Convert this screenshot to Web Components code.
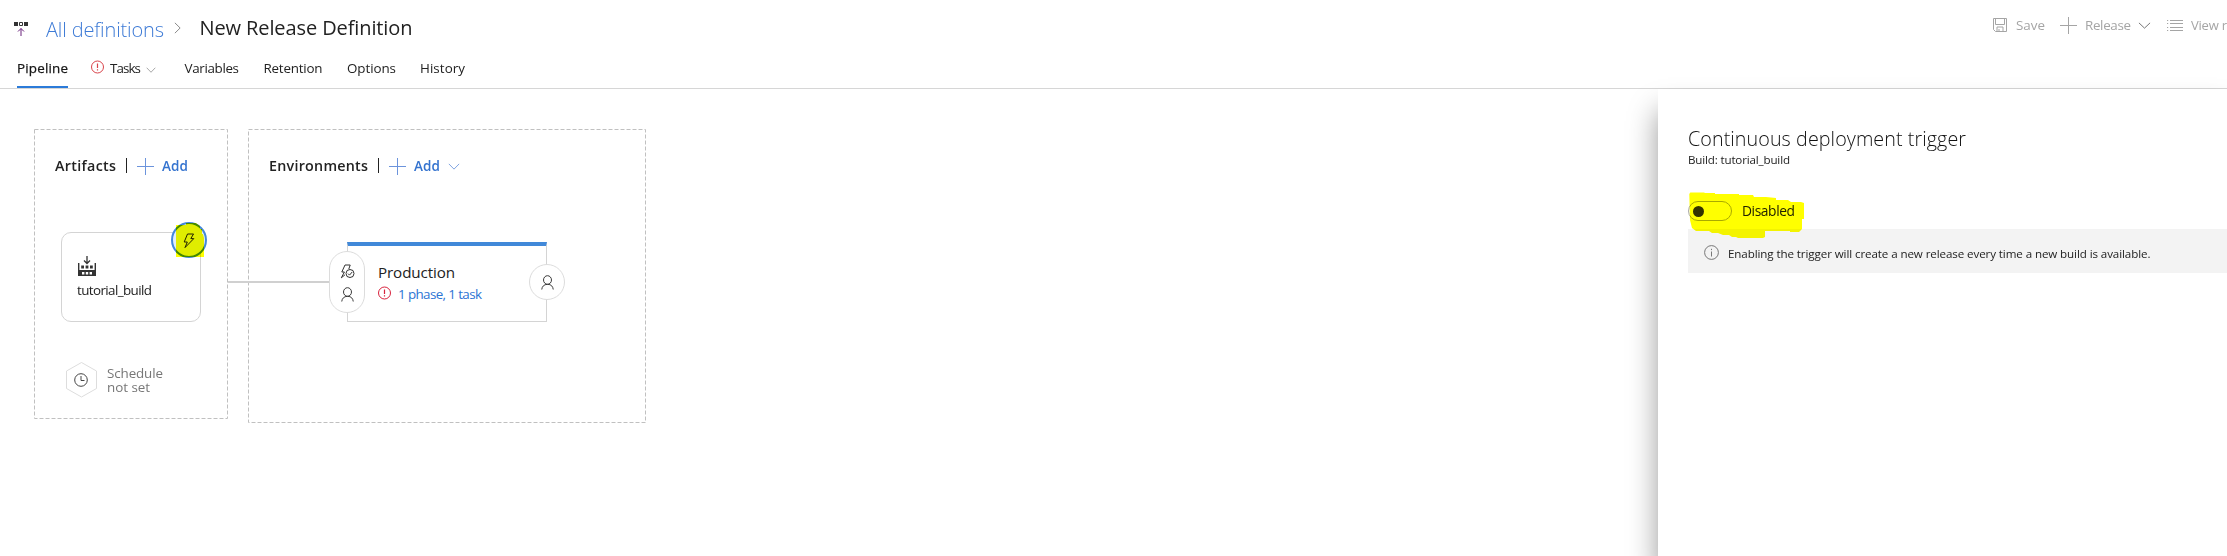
<!DOCTYPE html>
<html lang="en">
<head>
<meta charset="utf-8">
<title>New Release Definition</title>
<style>
html,body{margin:0;height:100%}
body{font-family:"Open Sans","Noto Sans",sans-serif;color:#333;background:#fff;overflow:hidden}
</style>
</head>
<body>
<release-editor></release-editor>
<script>
const define = (name, css, html, init) => customElements.define(name, class extends HTMLElement {
  connectedCallback() {
    if (this.shadowRoot) return;
    const root = this.attachShadow({ mode: 'open' });
    root.innerHTML = `<style>*{box-sizing:border-box}${css}</style>${html}`;
    if (init) init(this, root);
  }
});

/* Label whose tracking is tuned so that it fills the width given in "w". */
define('fit-text',
  `:host{display:block;white-space:nowrap;flex:none;font-size:13px;line-height:20px}span{display:inline-block}`,
  `<span><slot></slot></span>`,
  (host, root) => {
    const w = +host.getAttribute('w'), s = +host.getAttribute('size') || 13.4;
    host.style.fontSize = s + 'px';
    host.style.width = w + 'px';
    const span = root.querySelector('span');
    const natural = span.getBoundingClientRect().width;
    const n = host.textContent.length;
    span.style.letterSpacing = ((w - natural) / (n - 1)) + 'px';
  });

/* Line icons, one glyph per name. */
const glyphs = {
  pipeline: [14, 16, `<path d="M0 1h4v4H0zM10 1h4v4h-4z" fill="#333" stroke="none"/><path d="M5.500 1.500h3v3h-3z" stroke="#333"/><path d="M7 15V7.500M4 10.500l3-3 3 3" stroke="#68217a"/>`],
  chevronRight: [8, 14, `<path d="M1 1l6 6-6 6"/>`],
  chevron: [14, 8, `<path d="M1 1l6 6 6-6"/>`],
  plus: [17, 17, `<path d="M8.5 0v17M0 8.5h17"/>`],
  save: [14, 14, `<path d="M.5.5h13v13h-11l-2-2zM2.5.5v6h9v-6M4 13.5V9h6v4.5M6 13.5v-2.5"/>`],
  list: [16, 12, `<path d="M0 .5h1.200M3 .5h13M0 3.500h1.200M3 3.500h13M0 7.500h1.200M3 7.500h13M0 10.500h1.200M3 10.500h13"/>`],
  alert: [14, 14, `<circle cx="6.500" cy="7" r="6"/><path d="M6.500 3.500v4.500M6.500 9.300v1.300" stroke-width="1.200"/>`],
  info: [15, 15, `<circle cx="7.5" cy="7.5" r="6.9"/><path d="M7.5 6.5v5M7.5 3.8v1.3"/>`],
  clock: [14, 14, `<circle cx="7" cy="7" r="6.3"/><path d="M7 3v4.5h3.5"/>`],
  person: [14, 15, `<circle cx="7" cy="5" r="4.3"/><path d="M.8 14.5C1.2 11.5 3 9.4 7 9.3s5.800 2.200 6.200 5.200"/>`],
  bolt: [12, 16, `<path d="M4.500 1h6L7.800 5.600h3L2 14.600 4.300 9H1.200z"/>`],
  boltCheck: [15, 15, `<path d="M8.800 5L10.200 1H5L1.800 8h2.600L1.300 13.800 5 10.800"/><circle cx="10" cy="9.500" r="4"/><path d="M8 9.600l1.500 1.500L12.200 8"/>`],
  build: [18, 20, `<path d="M9 0v7.500M6 4.500l3 3 3-3" stroke-width="1.300"/><path d="M.7 7v12M17.300 7v12" stroke-width="1.400"/><path d="M3.200 9.500h2.800v3H3.200zM7.600 9.500h2.800v3H7.600zM12 9.500h2.800v3H12z" fill="#333" stroke="none"/><path d="M0 14h18v6H0zM4 16v2.400h2.400V16zM7.800 16v2.400h2.400V16zM11.600 16v2.400H14V16z" fill="#333" fill-rule="evenodd" stroke="none"/>`]
};
define('line-icon', `:host{display:block;flex:none}svg{display:block;fill:none;stroke:currentColor;stroke-width:1}`, '',
  (host, root) => {
    const [w, h, body] = glyphs[host.getAttribute('name')];
    const dw = host.getAttribute('w') || w, dh = host.getAttribute('h') || h;
    root.innerHTML += `<svg width="${dw}" height="${dh}" viewBox="0 0 ${w} ${h}" preserveAspectRatio="none">${body}</svg>`;
  });

define('page-header', `
:host{display:block;height:89px;border-bottom:1px solid #d6d6d6;position:relative}
.top{display:flex;height:56px;padding-left:14px;align-items:flex-start}
.logo{margin-top:21px}
.all{color:#3e7bd6;font-weight:300;margin:20px 0 0 18px}
.sep{color:#777;margin:22px 0 0 10px}
.title{margin:18px 0 0 18.500px;color:#222}
.tools{margin-left:auto;width:234px;display:flex;color:#a5a5a5;overflow:hidden}
.tools fit-text{margin-top:15px}
.tabs{display:flex;height:32px;padding-left:17px}
.tab{display:flex;height:32px;padding-top:2px;color:#222}
.tab.on{border-bottom:2px solid #2b7bd9;color:#111;-webkit-text-stroke:.25px #222}`,
`<div class="top">
 <line-icon class="logo" name="pipeline" w="14" h="16"></line-icon>
 <fit-text class="all" w="118" size="20">All definitions</fit-text>
 <line-icon class="sep" name="chevronRight" w="7" h="12"></line-icon>
 <fit-text class="title" w="213" size="20">New Release Definition</fit-text>
 <div class="tools">
  <line-icon name="save" style="margin-top:18px"></line-icon><fit-text w="29" style="margin-left:9px">Save</fit-text>
  <line-icon name="plus" style="margin:17px 0 0 15px"></line-icon><fit-text w="46" style="margin-left:8px">Release</fit-text>
  <line-icon name="chevron" w="13" h="7" style="margin:22px 0 0 7px;color:#666"></line-icon>
  <line-icon name="list" style="margin:20px 0 0 16px"></line-icon><fit-text w="36" size="13" style="margin-left:8px">View r</fit-text>
 </div>
</div>
<div class="tabs">
 <div class="tab on"><fit-text w="51">Pipeline</fit-text></div>
 <div class="tab" style="margin-left:23px"><line-icon name="alert" style="color:#d9434a;margin:2px 5px 0 0"></line-icon><fit-text w="31">Tasks</fit-text><line-icon name="chevron" w="10" h="6" style="color:#888;margin:9px 0 0 5px"></line-icon></div>
 <div class="tab" style="margin-left:28.500px"><fit-text w="54.500">Variables</fit-text></div>
 <div class="tab" style="margin-left:24.500px"><fit-text w="59">Retention</fit-text></div>
 <div class="tab" style="margin-left:24.500px"><fit-text w="49">Options</fit-text></div>
 <div class="tab" style="margin-left:24px"><fit-text w="45">History</fit-text></div>
</div>`);

/* Dashed lane: a heading with its Add action, and the nodes slotted in. */
define('pipeline-lane', `
:host{display:block;box-sizing:border-box;position:relative;flex:none}
.edge{position:absolute;inset:0;width:100%;height:100%;pointer-events:none}
.head{display:flex;height:20px;margin:27px 0 0 21px;color:#222}
.head fit-text{font-weight:600}
i{width:1px;height:15px;background:#222;margin:2px 10px 0 10px}
.head .add{color:#3473cf;margin-left:8px}
line-icon{color:#6c94dc;margin-top:2px}`,
`<svg class="edge"><rect x=".5" y=".5" fill="none" stroke="#c0c0c0" stroke-dasharray="4 2"/></svg>
<div class="head"></div><slot></slot>`,
  (host, root) => {
    const r = root.querySelector('rect');
    r.setAttribute('width', host.offsetWidth - 1);
    r.setAttribute('height', host.offsetHeight - 1);
    root.querySelector('.head').innerHTML = `<fit-text w="${host.getAttribute('label-width')}" size="14.300">${host.getAttribute('label')}</fit-text><i></i><line-icon name="plus"></line-icon><fit-text class="add" w="26" size="13.500">Add</fit-text>` +
      (host.hasAttribute('menu') ? '<line-icon name="chevron" w="12" h="7" style="margin:7px 0 0 8px"></line-icon>' : '');
  });

define('artifact-card', `
:host{display:block;box-sizing:border-box;width:140px;height:90px;margin:56px 0 0 27px;border:1px solid #d4d4d4;border-radius:10px;background:#fff;position:relative;padding:23px 0 0 15px}
line-icon{margin-left:1px}
fit-text{margin-top:4px;color:#222}
.trigger{position:absolute;left:109px;top:-11px;width:36px;height:36px;border:2px solid #4488da;border-radius:50%;background:#e0edfa;display:flex;align-items:center;justify-content:center}
.trigger line-icon{margin:2px 0 0 0;color:#222}
.marker{position:absolute;left:114px;top:-11px;mix-blend-mode:multiply}`,
`<line-icon name="build" w="18" h="20"></line-icon><div class="name"></div>
<div class="trigger"><line-icon name="bolt" w="12" h="16"></line-icon></div>
<svg class="marker" width="30" height="36"><path fill="#ff0" d="M0 3h10V1h10l4 3v3h2v5h1l1 4v19H0z"/></svg>`,
  (host, root) => {
    root.querySelector('.name').innerHTML = `<fit-text w="75">${host.getAttribute('name')}</fit-text>`;
  });

define('schedule-badge', `
:host{display:flex;margin:39px 0 0 32px;color:#777}
.hex{width:31px;height:37px;position:relative;flex:none}
svg{display:block}
line-icon{position:absolute;left:8px;top:12px;color:#444}
.txt{margin:5px 0 0 10px}`,
`<div class="hex"><svg width="31" height="37"><path d="M15.500 1.500l15 8.500v17.500l-15 8.500L.5 27.500V10z" fill="none" stroke="#ddd"/></svg><line-icon name="clock"></line-icon></div>
<div class="txt"><fit-text w="56" style="line-height:14px">Schedule</fit-text><fit-text w="43" style="line-height:14px">not set</fit-text></div>`);

define('environment-card', `
:host{display:block;box-sizing:border-box;width:200px;height:80px;margin:66px 0 0 99px;border:1px solid #d4d4d4;border-top:4px solid #4189d9;position:relative;padding:16px 0 0 30px;background:#fff}
.pre,.post{position:absolute;width:36px;border:1px solid #dcdcdc;border-radius:18px;background:#fff;display:flex;flex-direction:column;align-items:center;color:#333}
.pre{left:-19px;top:5px;height:62px;padding-top:12px;gap:8px}
.post{left:181px;top:18px;height:36px;justify-content:center}
.name{color:#222}
.jobs{display:flex;gap:6px;color:#2c74d4;margin-top:2px}
.jobs line-icon{color:#d8213c;margin-top:2px}`,
`<fit-text class="name" w="77" size="15.200">Production</fit-text>
<div class="jobs"><line-icon name="alert"></line-icon><fit-text w="84">1 phase, 1 task</fit-text></div>
<div class="pre"><line-icon name="boltCheck"></line-icon><line-icon name="person" w="13" h="15"></line-icon></div>
<div class="post"><line-icon name="person" w="13" h="15"></line-icon></div>`);

define('trigger-panel', `
:host{display:block;box-sizing:border-box;width:569px;background:#fff;padding:40px 0 0 30px;box-shadow:0 22px 28px rgba(0,0,0,.4);position:relative;color:#333}
.title{font-weight:300;color:#111}
.build{margin-top:1px;color:#222}
.row{display:flex;margin-top:31px;height:28px}
.switch{width:44px;height:20px;border:1px solid #aaa;border-radius:10px;padding:4px 0 0 4px}
.switch b{display:block;width:11px;height:11px;border-radius:50%;background:#333}
.row fit-text{margin-left:10px;color:#222}
.note{display:flex;height:44px;background:#f3f3f3;padding:16px 0 0 16px;color:#777}
.note fit-text{margin:-1px 0 0 9px;color:#222}
.marker{position:absolute;left:30px;top:102px;mix-blend-mode:multiply}`,
`<fit-text class="title" w="278" size="19.700">Continuous deployment trigger</fit-text>
<div class="build"><fit-text w="102" size="11.600">Build: tutorial_build</fit-text></div>
<div class="row"><div class="switch"><b></b></div><fit-text w="53" size="13.800">Disabled</fit-text></div>
<div class="note"><line-icon name="info"></line-icon><fit-text w="422.500" size="11.600">Enabling the trigger will create a new release every time a new build is available.</fit-text></div>
<svg class="marker" width="120" height="48"><path fill="#ff0" d="M1.300 3l1-1.500H16l1 .5h10v1h24v1h14l1 2h12l10 1v2h12l3 2h10l3 1v16h-2v10l-3 3H102v-1H77v6l-2 1H50l-2-1h-4l-3-2h-6l-5-2h-6l-3-2H8l-4-3-2-8z"/></svg>`);

define('release-editor', `
:host{display:flex;flex-direction:column;height:100vh}
main{display:flex;flex:1;min-height:0}
.canvas{flex:1;display:flex;align-items:flex-start;gap:20px;padding:40px 0 0 34px;position:relative}
.link{position:absolute;left:228px;top:192px;width:101px;height:2px;background:#d0d0d0}`,
`<page-header></page-header>
<main>
 <div class="canvas">
  <pipeline-lane label="Artifacts" label-width="61" style="width:194px;height:290px;padding-top:.1px">
   <artifact-card name="tutorial_build"></artifact-card><schedule-badge></schedule-badge>
  </pipeline-lane>
  <pipeline-lane label="Environments" label-width="99" menu style="width:398px;height:294px;padding-top:.1px">
   <environment-card></environment-card>
  </pipeline-lane>
  <div class="link"></div>
 </div>
 <trigger-panel></trigger-panel>
</main>`);
</script>
</body>
</html>
